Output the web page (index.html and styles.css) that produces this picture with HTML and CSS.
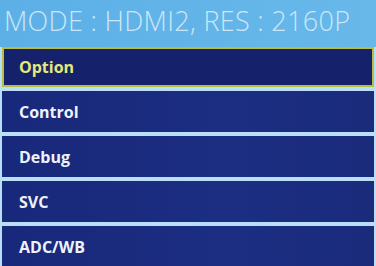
FILE: index.html
```html
<html lang="en">
  <head>
    <meta charset="UTF-8" />
    <title>Service Menu</title>
    <link rel="stylesheet" href="styles.css">
  </head>
  <body>
    <div class="screen">
      <div class="mode">MODE : HDMI2, RES : 2160P</div>
      <ul class="menu">
        <li class="item selected">Option</li>
        <li class="item">Control</li>
        <li class="item">Debug</li>
        <li class="item">SVC</li>
        <li class="item">ADC/WB</li>
      </ul>
    </div>
  </body>
</html>
```
FILE: styles.css
```css
body {
  margin: 0;
  background-color: #5fb2e6;
  font-family: "Open Sans", "DejaVu Sans", sans-serif;
}

.screen {
  width: 376px;
  height: 266px;
  overflow: hidden;
  background: linear-gradient(to right, #5cb0e6, #68b8ea);
}

.mode {
  height: 47px;
  padding-left: 4px;
  font-size: 27px;
  font-weight: 300;
  line-height: 42px;
  color: #cce6f7;
  letter-spacing: 0.3px;
  white-space: nowrap;
}

.menu {
  list-style: none;
  margin: 0;
  padding: 0 2px 0 2px;
  display: flex;
  flex-direction: column;
  gap: 4px;
  background-color: #b9def5;
}

.item {
  height: 41px;
  padding-left: 17px;
  display: flex;
  align-items: center;
  font-size: 16px;
  font-weight: 700;
  color: #eef2fb;
  background: linear-gradient(to right, #18287a, #1c2e82 60%, #1a2b7c);
}

.selected {
  height: 36px;
  border: 2px solid #b7bd44;
  padding-left: 15px;
  color: #e5e87a;
  background: #15226b;
}
```
